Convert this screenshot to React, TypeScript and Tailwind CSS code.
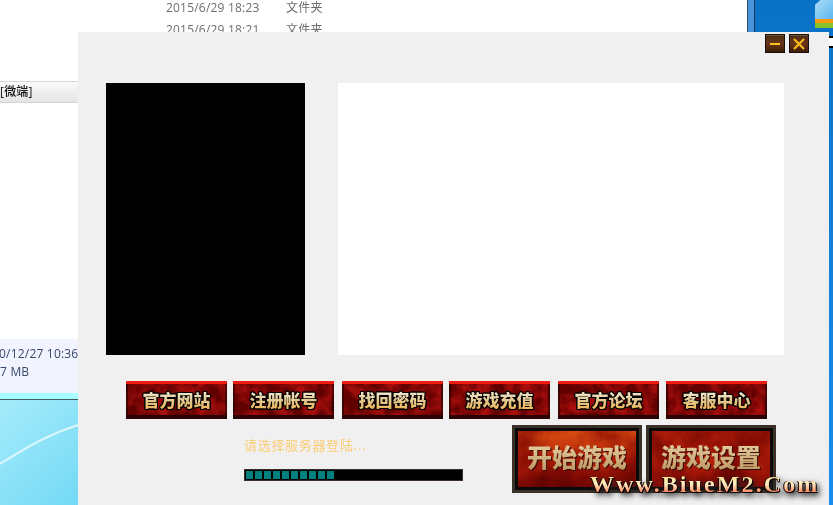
import type { ReactNode } from "react";

const gameFont = "[font-family:'Noto_Sans_CJK_SC','Liberation_Sans',sans-serif]";

const links = [
  { label: "官方网站", ml: "ml-0" },
  { label: "注册帐号", ml: "ml-[6px]" },
  { label: "找回密码", ml: "ml-[8px]" },
  { label: "游戏充值", ml: "ml-[6px]" },
  { label: "官方论坛", ml: "ml-[8px]" },
  { label: "客服中心", ml: "ml-[7px]" },
];

// mottled grain laid over the red buttons
function Grain({ seed, freq, alpha }: { seed: number; freq: number; alpha: string }) {
  return (
    <svg className="absolute inset-0 h-full w-full mix-blend-multiply" aria-hidden="true">
      <filter id={`grain-${seed}`} x="0" y="0" width="100%" height="100%">
        <feTurbulence type="fractalNoise" baseFrequency={freq} numOctaves="4" seed={seed} />
        <feColorMatrix values={`0 0 0 0 0.3  0 0 0 0 0  0 0 0 0 0  ${alpha}`} />
      </filter>
      <rect width="100%" height="100%" filter={`url(#grain-${seed})`} />
    </svg>
  );
}

function LinkButton({ label, ml, seed }: { label: string; ml: string; seed: number }) {
  return (
    <button
      className={`relative h-[38px] w-[101px] shrink-0 overflow-hidden border-t-[3px] border-b-[4px] border-t-[#f01c12] border-b-[#2a0202] bg-[#a80e0c] shadow-[inset_2px_0_0_#5a0606,inset_-2px_0_0_#5a0606] ${ml}`}
    >
      <Grain seed={seed} freq={0.07} alpha="2.4 0 0 0 -0.62" />
      <span
        className={`relative block bg-gradient-to-b from-[#ffffff] via-[#e2c994] to-[#f5ad2c] bg-clip-text text-center text-[17px] leading-[27px] font-black text-transparent [filter:drop-shadow(1px_0_0_#000)_drop-shadow(-1px_0_0_#000)_drop-shadow(0_1px_0_#000)_drop-shadow(0_-1px_0_#000)] ${gameFont}`}
      >
        {label}
      </span>
    </button>
  );
}

function BigButton({ children, seed, from }: { children: ReactNode; seed: number; from: string }) {
  return (
    <button className="h-[68px] w-[130px] shrink-0 border-[3px] border-[#3a3128] bg-[#0c0a08] p-[3px]">
      <span className={`relative block h-full w-full overflow-hidden bg-gradient-to-b ${from} via-[#b8200a] to-[#8a0a04]`}>
        <Grain seed={seed} freq={0.03} alpha="1.6 0 0 0 -0.55" />
        <span
          className={`relative block bg-gradient-to-b from-[#f8e8bc] to-[#b8925e] bg-clip-text pt-[7px] text-center text-[25px] leading-[36px] font-black text-transparent [filter:drop-shadow(1px_1px_0_#3a0a02)] ${gameFont}`}
        >
          {children}
        </span>
      </span>
    </button>
  );
}

function ProgressBar() {
  return (
    <div className="mt-[16px] flex h-[12px] w-[219px] gap-[2px] border border-[#3a2c2c] bg-black py-[1px] pl-[1px]">
      {Array.from({ length: 10 }).map((_, i) => (
        <div key={i} className="h-[8px] w-[7px] bg-[#008080]" />
      ))}
    </div>
  );
}

function WindowButton({ children }: { children: ReactNode }) {
  return (
    <button className="flex h-[19px] w-[20px] items-center justify-center border border-[#17100a] bg-gradient-to-b from-[#4a2c12] via-[#6a3418] to-[#3c1c08] shadow-[inset_0_1px_0_#6e5a34]">
      {children}
    </button>
  );
}

export default function App() {
  return (
    <div className="relative h-[505px] w-[833px] overflow-hidden bg-gradient-to-b from-[#0a72c6] to-[#1a8cec] [font-family:'Open_Sans','Noto_Sans_CJK_SC',sans-serif]">
      {/* desktop wallpaper under the explorer */}
      <div className="absolute top-[393px] left-0 h-[112px] w-[120px] bg-gradient-to-br from-[#a6ecfb] to-[#66d5f3]">
        <div className="h-[7px] border-b border-[#3f5c66] bg-[#a8ffff]" />
        <svg className="absolute top-0 left-0" width="120" height="112" aria-hidden="true">
          <path d="M0 71C30 52 50 41 78 32" fill="none" stroke="#d8f6fc" strokeWidth="2" />
        </svg>
      </div>

      {/* folder icon on the desktop */}
      <div className="absolute top-0 left-[815px] h-[28px] w-[18px]">
        <div className="h-[19px] bg-gradient-to-br from-[#a8dcf8] to-[#5cb8ec] [clip-path:polygon(30%_0,100%_0,100%_100%,0_100%,0_25%)]" />
        <div className="h-[4px] bg-[#f59a0c]" />
        <div className="h-[5px] bg-[#86c22c]" />
      </div>
      <div className="absolute top-[36px] left-[829px] h-[12px] w-[4px] border-y-2 border-black bg-white" />

      {/* explorer window behind the launcher */}
      <div className="absolute top-0 left-0 flex h-[393px] w-[748px] flex-col border-r border-[#33506e] bg-white text-[12px] tracking-[0.2px] text-[#6d6d6d]">
        <div className="flex h-[28px] items-start pl-[166px]">
          <span className="w-[120px] leading-[15px]">2015/6/29 18:23</span>
          <span className="leading-[15px]">文件夹</span>
        </div>
        <div className="mt-[-7px] flex h-[28px] items-start pl-[166px]">
          <span className="w-[120px] pt-[1px] leading-[15px]">2015/6/29 18:21</span>
          <span className="pt-[1px] leading-[15px]">文件夹</span>
        </div>
        <div className="mt-[32px] h-[22px] border-y border-[#d5d5d5] bg-gradient-to-b from-[#fbfbfb] to-[#e4e4e4] pt-[1px] text-[12px] leading-[18px] font-medium text-[#111]">
          [微端]
        </div>
        <div className="flex-1" />
        <div className="h-[54px] bg-[#f1f4fe] pt-[6px] text-[12px] leading-[18px] text-[#37476a]">
          <div className="ml-[-1px]">0/12/27 10:36</div>
          <div>7 MB</div>
        </div>
      </div>
      <div className="absolute top-0 left-[748px] h-[32px] w-[7px] border-r border-[#123a60] bg-[#4a94dc]" />

      {/* launcher */}
      <div className="absolute top-[32px] left-[78px] h-[473px] w-[751px] bg-[#f0f0f0]">
        <div className="flex justify-end gap-[4px] pt-[2px] pr-[20px]">
          <WindowButton>
            <span className="h-[2px] w-[10px] bg-[#f7c21a]" />
          </WindowButton>
          <WindowButton>
            <svg width="12" height="12" viewBox="0 0 12 12" aria-hidden="true">
              <path d="M1 1l10 10M11 1L1 11" stroke="#f7b81a" strokeWidth="2.2" />
            </svg>
          </WindowButton>
        </div>

        <div className="mt-[30px] ml-[28px] flex gap-[33px]">
          <div className="h-[272px] w-[199px] bg-black" />
          <div className="h-[272px] w-[446px] bg-white" />
        </div>

        <div className="mt-[26px] ml-[48px] flex">
          {links.map((l, i) => (
            <LinkButton key={l.label} label={l.label} ml={l.ml} seed={i + 1} />
          ))}
        </div>

        <div className="mt-[6px] flex">
          <div className="ml-[166px] w-[268px] pt-[12px]">
            <div className={`h-[16px] text-[13px] leading-[16px] tracking-[0.7px] text-[#fbcd75] ${gameFont}`}>
              请选择服务器登陆...
            </div>
            <ProgressBar />
          </div>
          <BigButton seed={11} from="from-[#d84c10]">开始游戏</BigButton>
          <div className="w-[4px]" />
          <BigButton seed={12} from="from-[#a81a08]">游戏设置</BigButton>
        </div>
      </div>

      {/* site watermark stamped over the shot */}
      <div className="absolute top-[471px] left-[590px] bg-gradient-to-b from-[#ffd860] via-[#ffeec4] to-[#f03a1c] bg-clip-text text-[24px] leading-[26px] font-bold tracking-[2.1px] whitespace-nowrap text-transparent [filter:drop-shadow(1px_1px_0_#000)_drop-shadow(-1px_0_0_#200)_drop-shadow(2px_3px_3px_#222)] [font-family:'Liberation_Serif',serif]">
        Www.BiueM2.Com
      </div>
    </div>
  );
}
